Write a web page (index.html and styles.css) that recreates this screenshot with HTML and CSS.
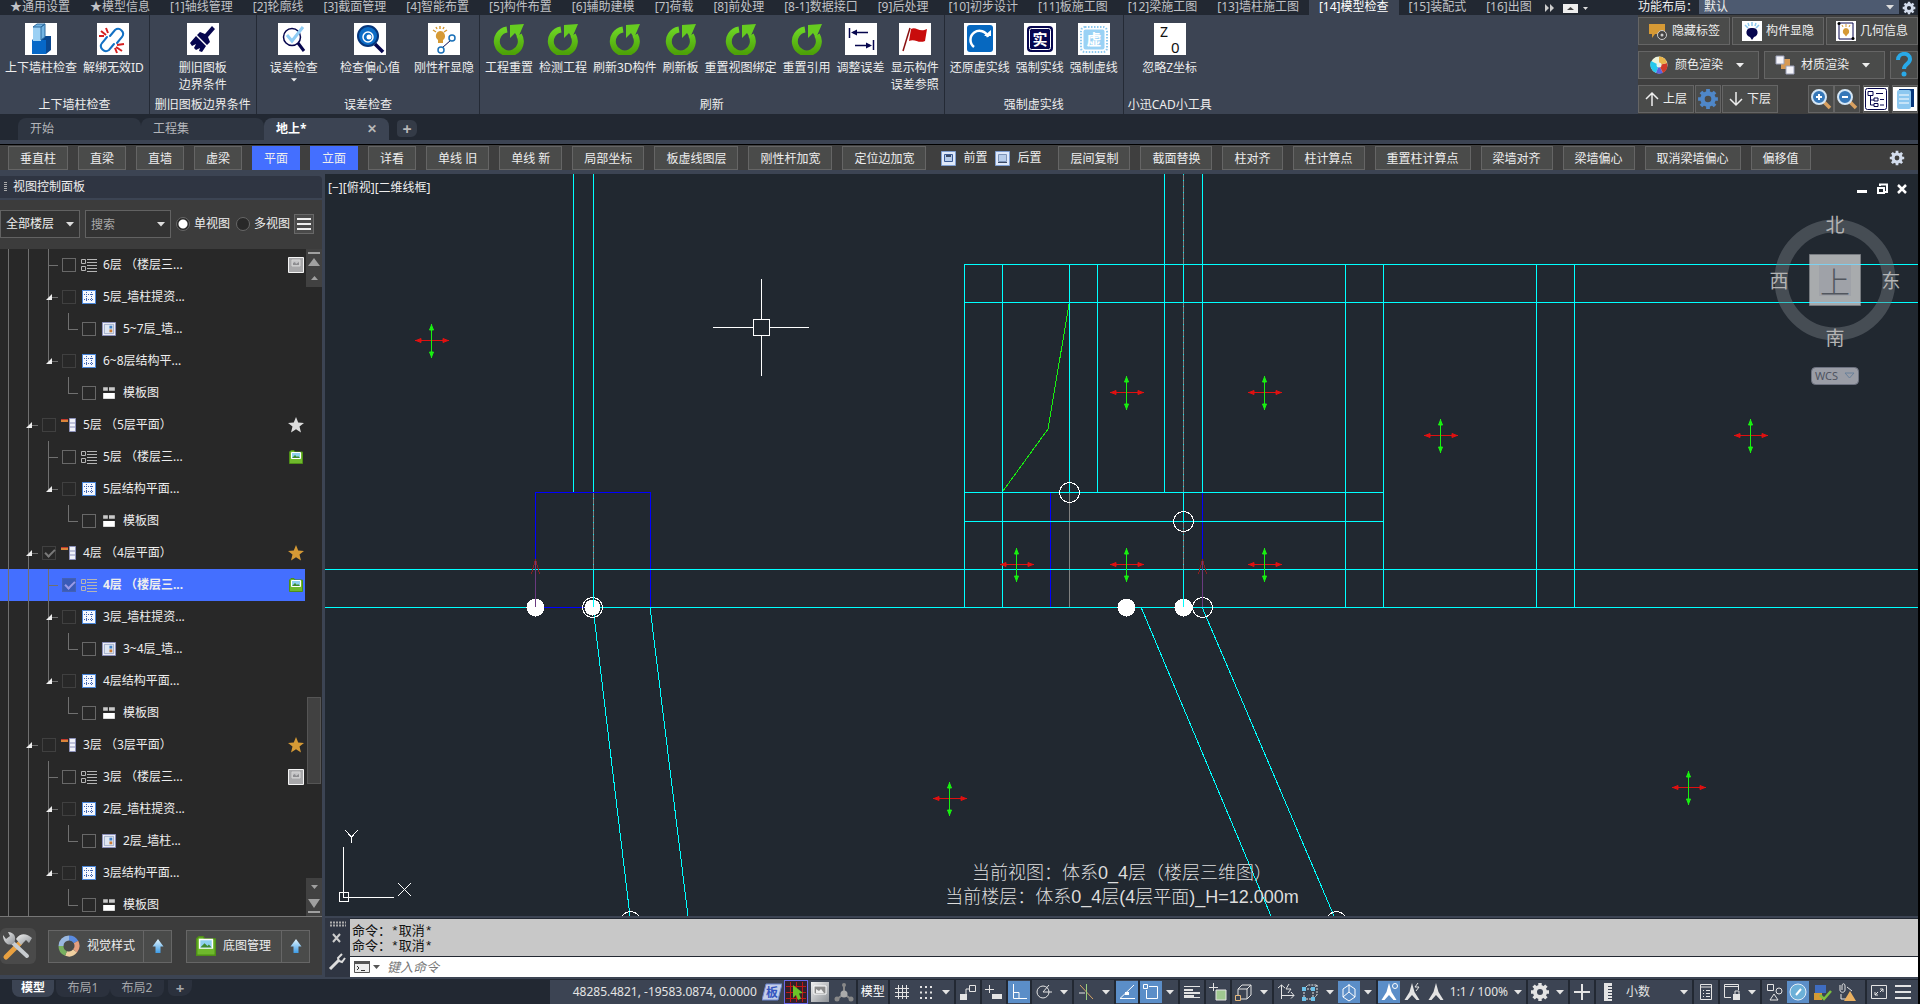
FILE: index.html
```html
<!DOCTYPE html>
<html lang="zh-CN">
<head>
<meta charset="utf-8">
<title>模型检查</title>
<link rel="stylesheet" href="styles.css">
</head>
<body>
<svg class="sprite" aria-hidden="true">
  <defs>
    <linearGradient id="green" x1="0" y1="0" x2="0" y2="1"><stop offset="0" stop-color="#6cd424"/><stop offset="1" stop-color="#4da208"/></linearGradient>
    <linearGradient id="sky" x1="0" y1="0" x2="0" y2="1"><stop offset="0" stop-color="#e4f6ff"/><stop offset="1" stop-color="#3c9be6"/></linearGradient>
    <linearGradient id="steel" x1="0" y1="0" x2="1" y2="1"><stop offset="0" stop-color="#f0f0f0"/><stop offset="1" stop-color="#8d9196"/></linearGradient>
  </defs>
  <symbol id="refresh" viewBox="0 0 32 32"><path d="M14 6.5A12 12 0 1 0 26 12" fill="none" stroke="url(#green)" stroke-width="6"/><path d="M17 2 31 1 25 15 22 10 17 15Z" fill="#66cc20"/></symbol>
  <symbol id="gear" viewBox="0 0 20 20"><g fill="none" stroke="currentColor"><circle cx="10" cy="10" r="5" stroke-width="4"/><path d="M10 1v3M10 16v3M1 10h3M16 10h3M3.6 3.6l2.1 2.1M14.3 14.3l2.1 2.1M3.6 16.4l2.1-2.1M14.3 5.7l2.1-2.1" stroke-width="3.4"/></g></symbol>
  <symbol id="grid" viewBox="0 0 14 14"><path d="M0 0h14v14H0z" fill="#4a86d8"/><path d="M1 1h12v12H1z" fill="#f4f8ff"/><path d="M2 4.5h10M2 9.5h10M4.5 2v10M9.500 2v10" stroke="#3c62b0" stroke-dasharray="1 1"/></symbol>
  <symbol id="list" viewBox="0 0 16 14"><path d="M.5 1.500h4v4h-4zM.5 8.500h4v4h-4z" fill="none" stroke="#b5b5b5"/><path d="M6 1.500h10M6 4.500h10M6 7.500h10M6 10.500h10M6 13.500h10" stroke="#b5b5b5"/></symbol>
  <symbol id="sheet" viewBox="0 0 15 15"><path d="M.5.5h14v14H.5z" fill="#f5f5fb" stroke="#8b90c0"/><path d="M2.500 2.500h10v10h-10z" fill="#dfe6f2" stroke="#9aa6c4"/><path d="M8 4h3v3H8z" fill="#3f7fc4"/><path d="M8 8h3v3H8z" fill="#c87b36"/></symbol>
  <symbol id="panel" viewBox="0 0 12 12"><path d="M1 1h4v3H1zM6 1h5v3H6z" fill="#c9c9c9"/><path d="M1 6h10v5H1z" fill="#fff"/></symbol>
  <symbol id="floor" viewBox="0 0 16 14"><path d="M0 1h7v3H0z" fill="#d9843a"/><path d="M0 1h7v1H0z" fill="#c03a2b"/><path d="M8.500.500h6v13h-6z" fill="#f1f3fa" stroke="#8d92bb"/><path d="M9 5h5M9 9h5" stroke="#8d92bb"/></symbol>
  <symbol id="star" viewBox="0 0 16 16"><path d="M8 0l2.200 5.500 5.800.4-4.500 3.700 1.500 6L8 12.300 3 15.600l1.500-6L0 5.900l5.800-.4z" fill="currentColor"/></symbol>
  <symbol id="pic" viewBox="0 0 14 14"><path d="M.5 2 2 .5h3L6 2h7.500v11.500H.5z" fill="#6fb92c" stroke="#4e8f17"/><path d="M2.500 2.500h9v6h-9z" fill="#8fd0ee" stroke="#fff"/><path d="M3 8l3-3 2 2 1-1 2 2z" fill="#3f8a2e"/></symbol>
  <symbol id="greypic" viewBox="0 0 16 16"><path d="M.5.500h15v15H.5z" fill="#a8a8aa" stroke="#f4f4f4"/><path d="M4 3h8v6H4z" fill="#c4c4c6" stroke="#d4d4d4"/><path d="M5 8V6l2-1 1 2 3-2v3z" fill="#8d8d90"/></symbol>
  <symbol id="tri" viewBox="0 0 8 5"><path d="M0 0h8L4 4.500z" fill="currentColor"/></symbol>
  <symbol id="uparrow" viewBox="0 0 12 16"><path d="M6 1l5.500 7.500H8.500V15h-5V8.500H.5z" fill="url(#sky)"/></symbol>
  <symbol id="person" viewBox="0 0 20 20"><path d="M10 1l2.500 9 5 8h-3l-4.500-5-4.500 5h-3l5-8z" fill="currentColor"/></symbol>
  <symbol id="cube" viewBox="0 0 20 20"><path d="M4 7h9v10H4zM4 7l4-4h9l-4 4M17 3v10l-4 4" fill="none" stroke="currentColor"/><path d="M1.500 13.500h5v5h-5z" fill="#3c4453" stroke="#e6b87c"/></symbol>
  <symbol id="cross" viewBox="0 0 36 36"><path d="M1 17.500h34M2 17.500l5-2v4zM34 17.500l-5-2v4z" stroke="#e01010" fill="#e01010"/><path d="M17.500 1v34M17.500 2l-2 5h4zM17.500 34l-2-5h4z" stroke="#18f010" fill="#18f010"/></symbol>
</svg>

<div class="app">
  <header class="top">
    <div class="ribbon-side">
      <nav class="menu">
        <a href="#">★通用设置</a><a href="#">★模型信息</a><a href="#">[1]轴线管理</a><a href="#">[2]轮廓线</a><a href="#">[3]截面管理</a><a href="#">[4]智能布置</a><a href="#">[5]构件布置</a><a href="#">[6]辅助建模</a><a href="#">[7]荷载</a><a href="#">[8]前处理</a><a href="#">[8-1]数据接口</a><a href="#">[9]后处理</a><a href="#">[10]初步设计</a><a href="#">[11]板施工图</a><a href="#">[12]梁施工图</a><a href="#">[13]墙柱施工图</a><a href="#" class="current">[14]模型检查</a><a href="#">[15]装配式</a><a href="#">[16]出图</a>
        <button class="more" aria-label="更多"><svg width="46" height="12" viewBox="0 0 46 12"><path d="M3 2l4 4-4 4zM8 2l4 4-4 4z" fill="#ccc"/><path d="M21 2h15v9H21z" fill="#eee"/><path d="M25 8h7l-3.500-3z" fill="#444"/><path d="M41 5h5l-2.500 3z" fill="#ddd"/></svg></button>
      </nav>
      <div class="ribbon">
        <section class="group">
          <div class="tools">
            <button class="tool"><svg viewBox="0 0 32 32"><path d="M0 0h32v32H0z" fill="#fff"/><path d="M7 17h14v14H7z" fill="#0668c8"/><path d="M7 17l5-4h14l-5 4zM21 17l5-4v14l-5 4z" fill="#0a4890"/><path d="M8 4h8v14H8z" fill="#9bd0f4"/><path d="M8 4l4-3h8l-4 3zM16 4l4-3v13l-4 3z" fill="#74b4e2" stroke="#2a6aa0"/></svg><span>上下墙柱检查</span></button>
            <button class="tool"><svg viewBox="0 0 32 32"><path d="M0 0h32v32H0z" fill="#fff"/><g fill="none" stroke="#1270c4" stroke-width="2" stroke-linecap="round"><path d="M13 13l5-6a5 5 0 0 1 7 7l-5 6"/><path d="M10 14l-5 6a5 5 0 0 0 7 7l5-6"/></g><path d="M9 5l2 5M4 8l5 4M2 13h5M20 22l7-1M19 24l6 4M18 25l2 5" stroke="#d42020" stroke-width="2"/></svg><span>解绑无效ID</span></button>
          </div>
          <h2>上下墙柱检查</h2>
        </section>
        <section class="group wide">
          <div class="tools">
            <button class="tool"><svg viewBox="0 0 32 32"><path d="M0 0h32v32H0z" fill="#fff"/><path d="M25 3l3 3-7 8 2 5-3 3L10 12l3-3 5 2zM9 13l10 10-4 6-3-1 1-3-4 2-2-2 2-4-4 2-2-3z" fill="#06064e"/></svg><span>删旧图板<br>边界条件</span></button>
          </div>
          <h2>删旧图板边界条件</h2>
        </section>
        <section class="group">
          <div class="tools">
            <button class="tool drop"><svg viewBox="0 0 32 32"><path d="M0 0h32v32H0z" fill="#fff"/><path d="M20 20l6 8" stroke="#06064e" stroke-width="3"/><circle cx="14" cy="14" r="8.500" fill="none" stroke="#06064e" stroke-width="1.500"/><path d="M9 12l5 6L25 4" fill="none" stroke="#8fcdf5" stroke-width="3"/></svg><span>误差检查</span><svg class="caret"><use href="#tri"/></svg></button>
            <button class="tool drop"><svg viewBox="0 0 32 32"><path d="M0 0h32v32H0z" fill="#fff"/><path d="M21 21l8 8" stroke="#06064e" stroke-width="3.500"/><circle cx="14" cy="13" r="10" fill="#0b6cc6" stroke="#06357a" stroke-width="2"/><circle cx="14" cy="14" r="5" fill="none" stroke="#fff" stroke-width="1.500"/><circle cx="15" cy="14" r="2.500" fill="#fff"/></svg><span>检查偏心值</span><svg class="caret"><use href="#tri"/></svg></button>
            <button class="tool"><svg viewBox="0 0 32 32"><path d="M0 0h32v32H0z" fill="#fff"/><path d="M12 8a5 5 0 0 1 3 9v3h-5v-3a5 5 0 0 1 2-9z" fill="#d69a35"/><path d="M12 3v3M5 7l3 2M19 7l-3 2M8 4l1 2M16 4l-1 2" stroke="#d69a35" stroke-width="1.500"/><path d="M14 25l9-8" stroke="#06064e"/><circle cx="24" cy="15" r="3" fill="#fff" stroke="#1a70b8" stroke-width="1.500"/><circle cx="13" cy="27" r="3" fill="#fff" stroke="#1a70b8" stroke-width="1.500"/></svg><span>刚性杆显隐</span></button>
          </div>
          <h2>误差检查</h2>
        </section>
        <section class="group">
          <div class="tools">
            <button class="tool"><svg><use href="#refresh"/></svg><span>工程重置</span></button>
            <button class="tool"><svg><use href="#refresh"/></svg><span>检测工程</span></button>
            <button class="tool"><svg><use href="#refresh"/></svg><span>刷新3D构件</span></button>
            <button class="tool"><svg><use href="#refresh"/></svg><span>刷新板</span></button>
            <button class="tool"><svg><use href="#refresh"/></svg><span>重置视图绑定</span></button>
            <button class="tool"><svg><use href="#refresh"/></svg><span>重置引用</span></button>
            <button class="tool"><svg viewBox="0 0 32 32"><path d="M0 0h32v32H0z" fill="#fff"/><path d="M4.500 5v10M28.500 17v10M8 9.500h15M10 22.500h15" stroke="#06064e" stroke-width="1.500"/><path d="M6 9.500l6-3v6zM27 22.500l-6-3v6z" fill="#06064e"/></svg><span>调整误差</span></button>
            <button class="tool"><svg viewBox="0 0 32 32"><path d="M0 0h32v32H0z" fill="#fff"/><path d="M4 28L11 5" stroke="#8a1010" stroke-width="1.500"/><path d="M12 6c5-3 8 4 16 0l-2 12c-7 3-10-3-16 0z" fill="#c80c0c"/></svg><span>显示构件<br>误差参照</span></button>
          </div>
          <h2>刷新</h2>
        </section>
        <section class="group">
          <div class="tools">
            <button class="tool"><svg viewBox="0 0 32 32"><path d="M0 0h32v32H0z" fill="#fff"/><rect x="3" y="2" width="26" height="27" rx="3" fill="#0668c0"/><path d="M10 24a9 9 0 1 1 14-10" fill="none" stroke="#fff" stroke-width="2.500"/><path d="M20 13h7v-6z" fill="#fff"/></svg><span>还原虚实线</span></button>
            <button class="tool"><svg viewBox="0 0 32 32"><path d="M0 0h32v32H0z" fill="#fff"/><rect x="3" y="3" width="26" height="26" rx="4" fill="#06064e"/><rect x="5.500" y="5.500" width="21" height="21" rx="2" fill="none" stroke="#fff"/><text x="8.500" y="22" font-size="15" font-weight="700" fill="#fff">实</text></svg><span>强制实线</span></button>
            <button class="tool"><svg viewBox="0 0 32 32"><path d="M0 0h32v32H0z" fill="#fff"/><rect x="3" y="4" width="26" height="25" rx="4" fill="none" stroke="#8cc8ee" stroke-width="2" stroke-dasharray="1.500 1.500"/><rect x="5.500" y="6.500" width="21" height="20" rx="2" fill="#9ad2f5"/><text x="8.500" y="22" font-size="15" font-weight="700" fill="#fff">虚</text></svg><span>强制虚线</span></button>
          </div>
          <h2>强制虚实线</h2>
        </section>
        <section class="group last">
          <div class="tools">
            <button class="tool"><svg viewBox="0 0 32 32"><path d="M0 0h32v32H0z" fill="#fff"/><text x="6" y="14" font-size="14" fill="#111">Z</text><text x="17" y="30" font-size="15" fill="#111">0</text></svg><span>忽略Z坐标</span></button>
          </div>
          <h2>小迅CAD小工具</h2>
        </section>
      </div>
    </div>

    <aside class="quick">
      <div class="layout-pick">
        <label for="layout">功能布局：</label>
        <span class="pick"><select id="layout"><option>默认</option></select><svg class="caret"><use href="#tri"/></svg></span>
        <button aria-label="设置" class="pale"><svg width="14" height="14"><use href="#gear"/></svg></button>
      </div>
      <div class="qrow three">
        <button class="key"><svg width="20" height="20" viewBox="0 0 20 20"><path d="M1 3h16v10H7l-3 4v-4H1z" fill="#d69a35"/><circle cx="14" cy="14" r="4.500" fill="#444" stroke="#ccc"/><circle cx="14" cy="14" r="1.500" fill="#ccc"/></svg>隐藏标签</button>
        <button class="key"><svg width="20" height="20" viewBox="0 0 20 20"><path d="M0 0h20v20H0z" fill="#fff"/><path d="M10 7a4.500 4.500 0 0 1 2 9l-2 3-2-3a4.500 4.500 0 0 1 2-9z" fill="#06064e"/><path d="M10 1v4M3 4l3 3M17 4l-3 3M6 2l1 3M14 2l-1 3" stroke="#8cc8ee" stroke-width="1.500"/></svg>构件显隐</button>
        <button class="key"><svg width="20" height="20" viewBox="0 0 20 20"><path d="M0 0h20v20H0z" fill="#fff"/><path d="M3 2v16h14V2z" fill="none" stroke="#06064e"/><circle cx="3" cy="2.500" r="1.500"/><circle cx="17" cy="17.500" r="1.500"/><path d="M10 7a3.500 3.500 0 0 1 1.500 6.500l-1.500 2-1.500-2A3.500 3.500 0 0 1 10 7z" fill="#d69a35"/><path d="M10 3v3M6 4l1 2M14 4l-1 2" stroke="#d69a35"/></svg>几何信息</button>
      </div>
      <div class="qrow two">
        <button class="key"><svg width="20" height="20" viewBox="0 0 20 20"><circle cx="10" cy="10" r="8.500" fill="#eef3dc"/><path d="M10 10L2 6a9 9 0 0 0 5 12z" fill="#25c8ee"/><path d="M10 10l-3 8a9 9 0 0 0 7 0z" fill="#5a62e0"/><path d="M10 10l4 8a9 9 0 0 0 4-10z" fill="#d03a2a"/><path d="M10 10l8-2a9 9 0 0 0-8-6.500z" fill="#e9b44a"/><circle cx="10" cy="10" r="2.500" fill="#e8f3ea"/></svg><span>颜色渲染</span><svg class="caret"><use href="#tri"/></svg></button>
        <button class="key"><svg width="20" height="20" viewBox="0 0 20 20"><path d="M6 4h9v10H6z" fill="#d69a55"/><path d="M1 1h8v8H1zM11 11h8v8h-8z" fill="#f4f4fa" stroke="#9aa0b8"/></svg><span>材质渲染</span><svg class="caret"><use href="#tri"/></svg></button>
        <button class="key small" aria-label="帮助"><svg width="20" height="26" viewBox="0 0 20 26"><path d="M4 8c0-8 12-8 12-1 0 5-6 5-6 10" fill="none" stroke="#29a9e8" stroke-width="4"/><circle cx="10" cy="22" r="2.500" fill="#29a9e8"/></svg></button>
      </div>
      <div class="qrow nav">
        <button class="key level"><svg width="14" height="16" viewBox="0 0 14 16"><path d="M7 15V2M1 8l6-6 6 6" fill="none" stroke="#eee" stroke-width="1.500"/></svg>上层</button>
        <button class="key icon blue" aria-label="楼层设置"><svg width="22" height="22"><use href="#gear"/></svg></button>
        <button class="key level"><svg width="14" height="16" viewBox="0 0 14 16"><path d="M7 1v13M1 8l6 6 6-6" fill="none" stroke="#eee" stroke-width="1.500"/></svg>下层</button>
        <span class="push"></span>
        <button class="key icon" aria-label="放大"><svg width="22" height="22" viewBox="0 0 22 22"><path d="M14 14l6 6" stroke="#d8a060" stroke-width="3.500"/><circle cx="9" cy="9" r="7" fill="#3577b8" stroke="#d4e6f5" stroke-width="2"/><path d="M9 6v6M6 9h6" stroke="#fff" stroke-width="2"/></svg></button><button class="key icon" aria-label="缩小"><svg width="22" height="22" viewBox="0 0 22 22"><path d="M14 14l6 6" stroke="#d8a060" stroke-width="3.500"/><circle cx="9" cy="9" r="7" fill="#3577b8" stroke="#d4e6f5" stroke-width="2"/><path d="M6 9h6" stroke="#fff" stroke-width="2"/></svg></button>
        <button class="key icon gap" aria-label="结构树"><svg width="24" height="24" viewBox="0 0 24 24"><rect width="24" height="24" fill="#fff"/><rect x="1.500" y="1.500" width="21" height="21" rx="2" fill="#fff" stroke="#06064e"/><path d="M4 4.500h5v4H4zM6.500 9v9H10M6.500 13H10M12 6.500h7M10 11h4v3h-4zM10 16.500h4v3h-4zM16 12.500h4M16 18h4" fill="none" stroke="#06064e"/></svg></button>
        <button class="key icon gap" aria-label="列表"><svg width="24" height="24" viewBox="0 0 24 24"><rect width="24" height="24" fill="#fff"/><path d="M6 2h15v18H8z" fill="#06357a"/><rect x="4" y="3" width="14" height="19" rx="2" fill="#8dc8f0"/><path d="M6 8h10M6 12h10M6 16h10" stroke="#fff"/></svg></button>
      </div>
    </aside>
  </header>

  <nav class="docs">
    <a href="#" class="doc"><span>开始</span></a>
    <a href="#" class="doc"><span>工程集</span></a>
    <a href="#" class="doc on"><span>地上*</span><b>✕</b></a>
    <button class="add" aria-label="新建">+</button>
  </nav>

  <div class="bar">
    <button class="key">垂直柱</button><button class="key">直梁</button><button class="key">直墙</button><button class="key">虚梁</button><button class="key on">平面</button><button class="key on">立面</button><button class="key">详看</button><button class="key">单线 旧</button><button class="key">单线 新</button><button class="key">局部坐标</button><button class="key">板虚线图层</button><button class="key">刚性杆加宽</button><button class="key">定位边加宽</button>
    <div class="order">
      <button><svg width="15" height="15" viewBox="0 0 15 15"><path d="M.5.500h14v14H.5z" fill="#dfe9fa" stroke="#7f9ed0"/><path d="M3.500 3.500h8v7h-8z" fill="#b8cdea" stroke="#3a5a96"/><path d="M5 4h5v2H5z" fill="#3a4a66"/></svg>前置</button>
      <button><svg width="15" height="15" viewBox="0 0 15 15"><path d="M.5.500h14v14H.5z" fill="#dfe9fa" stroke="#7f9ed0"/><path d="M3.500 3.500h8v7h-8z" fill="#b8cdea" stroke="#7c93b8"/><path d="M3 11.500h9" stroke="#3a4a66"/></svg>后置</button>
    </div>
    <button class="key">层间复制</button><button class="key">截面替换</button><button class="key">柱对齐</button><button class="key">柱计算点</button><button class="key">重置柱计算点</button><button class="key">梁墙对齐</button><button class="key">梁墙偏心</button><button class="key">取消梁墙偏心</button><button class="key">偏移值</button>
    <button class="pale end" aria-label="工具栏设置"><svg width="16" height="16"><use href="#gear"/></svg></button>
  </div>

  <main class="work">
    <aside class="side">
      <h1><i></i>视图控制面板</h1>
      <div class="filter">
        <span class="pick floors"><select aria-label="楼层"><option>全部楼层</option></select><svg class="caret"><use href="#tri"/></svg></span>
        <span class="pick search"><input type="text" placeholder="搜索" aria-label="搜索"><svg class="caret"><use href="#tri"/></svg></span>
        <label><input type="radio" name="views" checked>单视图</label>
        <label><input type="radio" name="views">多视图</label>
        <button class="burger" aria-label="菜单"><i></i><i></i><i></i></button>
      </div>
      <div class="tree-box">
        <div class="tree">
          <div class="row"><i class="g"></i><i class="g"></i><i class="b full"></i><label><input type="checkbox"><svg><use href="#list"/></svg>6层 （楼层三...</label><svg class="tag"><use href="#greypic"/></svg></div>
          <div class="row"><i class="g"></i><i class="g"></i><i class="b full open"></i><label><input type="checkbox" disabled><svg><use href="#grid"/></svg>5层_墙柱提资...</label></div>
          <div class="row"><i class="g"></i><i class="g"></i><i class="g"></i><i class="b half"></i><label><input type="checkbox"><svg><use href="#sheet"/></svg>5~7层_墙...</label></div>
          <div class="row"><i class="g"></i><i class="g"></i><i class="b half open"></i><label><input type="checkbox" disabled><svg><use href="#grid"/></svg>6~8层结构平...</label></div>
          <div class="row"><i class="g"></i><i class="g"></i><i class="g none"></i><i class="b half"></i><label><input type="checkbox"><svg><use href="#panel"/></svg>模板图</label></div>
          <div class="row"><i class="g"></i><i class="b full open"></i><label><input type="checkbox" disabled><svg><use href="#floor"/></svg>5层 （5层平面）</label><svg class="tag"><use href="#star"/></svg></div>
          <div class="row"><i class="g"></i><i class="g"></i><i class="b full"></i><label><input type="checkbox"><svg><use href="#list"/></svg>5层 （楼层三...</label><svg class="tag small"><use href="#pic"/></svg></div>
          <div class="row"><i class="g"></i><i class="g"></i><i class="b half open"></i><label><input type="checkbox" disabled><svg><use href="#grid"/></svg>5层结构平面...</label></div>
          <div class="row"><i class="g"></i><i class="g"></i><i class="g none"></i><i class="b half"></i><label><input type="checkbox"><svg><use href="#panel"/></svg>模板图</label></div>
          <div class="row"><i class="g"></i><i class="b full open"></i><label><input type="checkbox" disabled checked><svg><use href="#floor"/></svg>4层 （4层平面）</label><svg class="tag gold"><use href="#star"/></svg></div>
          <div class="row picked"><i class="g"></i><i class="g"></i><i class="b full"></i><label><input type="checkbox" checked><svg><use href="#list"/></svg>4层 （楼层三...</label><svg class="tag small"><use href="#pic"/></svg></div>
          <div class="row"><i class="g"></i><i class="g"></i><i class="b full open"></i><label><input type="checkbox" disabled><svg><use href="#grid"/></svg>3层_墙柱提资...</label></div>
          <div class="row"><i class="g"></i><i class="g"></i><i class="g"></i><i class="b half"></i><label><input type="checkbox"><svg><use href="#sheet"/></svg>3~4层_墙...</label></div>
          <div class="row"><i class="g"></i><i class="g"></i><i class="b half open"></i><label><input type="checkbox" disabled><svg><use href="#grid"/></svg>4层结构平面...</label></div>
          <div class="row"><i class="g"></i><i class="g"></i><i class="g none"></i><i class="b half"></i><label><input type="checkbox"><svg><use href="#panel"/></svg>模板图</label></div>
          <div class="row"><i class="g"></i><i class="b full open"></i><label><input type="checkbox" disabled><svg><use href="#floor"/></svg>3层 （3层平面）</label><svg class="tag gold"><use href="#star"/></svg></div>
          <div class="row"><i class="g"></i><i class="g"></i><i class="b full"></i><label><input type="checkbox"><svg><use href="#list"/></svg>3层 （楼层三...</label><svg class="tag"><use href="#greypic"/></svg></div>
          <div class="row"><i class="g"></i><i class="g"></i><i class="b full open"></i><label><input type="checkbox" disabled><svg><use href="#grid"/></svg>2层_墙柱提资...</label></div>
          <div class="row"><i class="g"></i><i class="g"></i><i class="g"></i><i class="b half"></i><label><input type="checkbox"><svg><use href="#sheet"/></svg>2层_墙柱...</label></div>
          <div class="row"><i class="g"></i><i class="g"></i><i class="b half open"></i><label><input type="checkbox" disabled><svg><use href="#grid"/></svg>3层结构平面...</label></div>
          <div class="row"><i class="g"></i><i class="g"></i><i class="g none"></i><i class="b half"></i><label><input type="checkbox"><svg><use href="#panel"/></svg>模板图</label></div>
        </div>
        <div class="scroll">
          <svg width="16" height="38" viewBox="0 0 16 38"><path d="M2 3h12v2H2zM2 17h12L8 9zM5 31h7l-3.500-4z" fill="#a0a0a0"/></svg>
          <i class="before"></i><i class="thumb"></i><i class="after"></i>
          <svg width="16" height="38" viewBox="0 0 16 38"><path d="M5 7h7l-3.500 4zM2 21h12l-6 9zM2 33h12v2H2z" fill="#a0a0a0"/></svg>
        </div>
      </div>
      <div class="foot">
        <button class="wrench" aria-label="工具"><svg width="32" height="30" viewBox="0 0 32 30"><path d="M4 26L18 12" stroke="#e8a040" stroke-width="5" stroke-linecap="round"/><path d="M14 8c5-7 11-5 16-1l-3 5-3-3-5 5z" fill="url(#steel)"/><path d="M11 12l14 13" stroke="#c8ccd0" stroke-width="4" stroke-linecap="round"/><path d="M1 4l3 4 4-3-2-4c6 0 9 5 6 11-5 4-11 0-11-8z" fill="url(#steel)"/></svg></button>
        <div class="split"><button class="wide-key"><svg width="22" height="22" viewBox="0 0 22 22"><g fill="none" stroke-width="5"><path d="M11 3a8 8 0 0 1 7 4" stroke="#5a8be0"/><path d="M18 7a8 8 0 0 1-1 9" stroke="#e6a080"/><path d="M17 16a8 8 0 0 1-9 2.500" stroke="#f0d0a0"/><path d="M8 18.500A8 8 0 0 1 3 11" stroke="#78b060"/><path d="M3 11a8 8 0 0 1 8-8" stroke="#9ab8e0"/></g></svg>视觉样式</button><button class="up" aria-label="展开视觉样式"><svg width="12" height="16"><use href="#uparrow"/></svg></button></div>
        <div class="split"><button class="wide-key"><svg width="20" height="20"><use href="#pic"/></svg>底图管理</button><button class="up" aria-label="展开底图管理"><svg width="12" height="16"><use href="#uparrow"/></svg></button></div>
      </div>
    </aside>

    <section class="stage">
      <div class="canvas">
        <svg class="drawing">
          <g transform="translate(-325 -174)" fill="none" shape-rendering="crispEdges">
            <g stroke="#808080"><path d="M1183.500 174V569M1069.500 492V607M593.500 492V569"/></g>
            <g stroke="#00e8f0" stroke-dasharray="1 5"><path d="M1183.500 174V569M593.500 492V569"/></g>
            <g stroke="#0000ff"><path d="M535.500 492V607M535 492.500H650M650.500 492V607M1050.500 492V607M1202.500 492V560"/></g>
            <g stroke="#00ffff">
              <path d="M964 264.500H2600M964 302.500H2600M964 492.500H1384M964 521.500H1384M325 569.500H2600M325 607.500H2600"/>
              <path d="M964.500 264V607M1002.500 264V607M1069.500 264V492M1097.500 264V492M1164.500 174V492M1202.500 174V492M1345.500 264V607M1383.500 264V607M1536.500 264V607M1574.500 264V607"/>
              <path d="M1183.500 264V302M1183.500 492V521M573.500 174V492M593.500 174V492"/>
              <path d="M593 607L630 916M650 607L688 916M1141 607L1271 916M1202 607L1334 916"/>
            </g>
            <path d="M535 607.500H593" stroke="#0000ff"/>
            <path d="M1069 304L1048 429 1003 491" stroke="#18f010"/>
            <g fill="#fff"><circle cx="535.500" cy="607.500" r="9"/><circle cx="592.500" cy="607.500" r="8"/><circle cx="1126.500" cy="607.500" r="9"/><circle cx="1183.500" cy="607.500" r="9"/></g>
            <g stroke="#fff"><circle cx="592.500" cy="607.500" r="10"/><circle cx="1202.500" cy="607.500" r="10"/><circle cx="1069.500" cy="492.500" r="10"/><circle cx="1183.500" cy="521.500" r="10"/><circle cx="630.500" cy="921.500" r="10"/><circle cx="1336.500" cy="921.500" r="10"/></g>
            <path d="M593.500 569V607M1183.500 569V607" stroke="#00ffff"/>
            <path d="M535.500 560V607M1202.500 560V607" stroke="#6a3a80"/>
            <path d="M535.500 559l-4 15M535.500 559l4 15M1202.500 559l-4 15M1202.500 559l4 15" stroke="#8b2020"/>
            <g stroke="#fff"><path d="M713 327.500H753M770 327.500H809M761.500 279V319M761.500 336V376M753.500 319.500h16v16h-16z"/><path d="M343.500 847V897.500H394M339.500 892.500h9v9h-9zM398 883l13 13M411 883l-13 13M345 830l6.500 7 6.500-7M351.500 837v6"/></g>
          </g>
          <g transform="translate(-325 -174)">
            <use href="#cross" x="414" y="323" width="36" height="36"/><use href="#cross" x="1109" y="375" width="36" height="36"/><use href="#cross" x="1247" y="375" width="36" height="36"/><use href="#cross" x="1423" y="418" width="36" height="36"/><use href="#cross" x="1733" y="418" width="36" height="36"/><use href="#cross" x="999" y="547" width="36" height="36"/><use href="#cross" x="1109" y="547" width="36" height="36"/><use href="#cross" x="1247" y="547" width="36" height="36"/><use href="#cross" x="932" y="781" width="36" height="36"/><use href="#cross" x="1671" y="770" width="36" height="36"/>
          </g>
        </svg>
        <span class="view-name">[−][俯视][二维线框]</span>
        <div class="win"><button aria-label="最小化"><svg width="12" height="12" viewBox="0 0 12 12"><path d="M1 7h10v3H1z" fill="#fff"/></svg></button><button aria-label="还原"><svg width="12" height="12" viewBox="0 0 12 12"><path d="M2 5h6v5H2zM4 3V1.500h7V9H9" fill="none" stroke="#fff" stroke-width="2"/></svg></button><button aria-label="关闭"><svg width="12" height="12" viewBox="0 0 12 12"><path d="M2 2l8 8M10 2l-8 8" stroke="#fff" stroke-width="2.500"/></svg></button></div>
        <div class="compass">
          <svg width="140" height="186" viewBox="0 0 140 186">
            <circle cx="70" cy="70" r="54" fill="none" stroke="#747a80" stroke-opacity=".45" stroke-width="13"/>
            <path d="M44.500 44.500h51v51h-51z" fill="#b4b6b8" fill-opacity=".92" stroke="#777b80"/>
            <path d="M54 55h32v31H54z" fill="#9fa2a8"/>
            <path d="M44 54.500h52M44 92.500h52" stroke="#7fd0ee"/>
            <text x="70" y="83" font-size="30" font-weight="300" text-anchor="middle" fill="#51565e">上</text>
            <g font-size="19" text-anchor="middle" fill="#b4b4b4"><text x="70" y="22">北</text><text x="14" y="78">西</text><text x="126" y="78">东</text><text x="70" y="135">南</text></g>
            <rect x="46.500" y="157.500" width="47" height="17" rx="4" fill="#9a9da6" stroke="#6d7280"/>
            <text x="50" y="170" font-size="11" fill="#4e5360">WCS</text><path d="M80 163h9l-4.500 5z" fill="none" stroke="#68809a"/>
          </svg>
        </div>
        <p class="caption">当前视图：体系0_4层（楼层三维图）<br>当前楼层：体系0_4层(4层平面)_H=12.000m</p>
      </div>
      <div class="command">
        <div class="handle"><svg width="25" height="58" viewBox="0 0 25 58"><path d="M5 4.500h16M5 7.500h16" stroke="#aaa" stroke-width="2" stroke-dasharray="2 1"/><path d="M8 16l7 8M15 16l-7 8" stroke="#ccc" stroke-width="2"/><path d="M5 51l9-9" stroke="#ddd" stroke-width="3"/><path d="M17 36l-4 4 1 3 3 1 3-4" fill="none" stroke="#ddd" stroke-width="2"/></svg></div>
        <div class="console">
          <div class="log">命令：*取消*<br>命令：*取消*</div>
          <div class="entry"><svg width="28" height="14" viewBox="0 0 28 14"><path d="M.5 1.500h15v11H.5z" fill="#eee" stroke="#555"/><path d="M0 1h16v3H0z" fill="#555"/><path d="M3 6l2 2-2 2M7 10.500h4" fill="none" stroke="#333"/><path d="M19 5h7l-3.500 4z" fill="#555"/></svg><input type="text" placeholder="键入命令" aria-label="命令"></div>
        </div>
      </div>
    </section>
  </main>

  <footer class="status">
    <nav class="sheets"><a href="#" class="on">模型</a><a href="#">布局1</a><a href="#">布局2</a><button aria-label="新建布局">+</button></nav>
    <div class="seg info"><span class="coords">48285.4821, -19583.0874, 0.0000</span>
      <button class="c" aria-label="板"><svg viewBox="0 0 20 20"><path d="M4 2h16l-4 16H0z" fill="#c3cee8" stroke="#6b84d0"/><text x="4" y="15" font-size="12" font-weight="700" fill="#3455c0">板</text></svg></button>
      <button class="c red" aria-label="选择"><svg viewBox="0 0 20 20"><path d="M4.500 0v20M10.500 0v20M16.500 0v20M0 4.500h20M0 10.500h20M0 16.500h20" stroke="#c01818"/><path d="M7 3l10 8-4 .5 2 5-3 1.500-2-5-3 3z" fill="#6cc428"/></svg></button>
      <button class="c" aria-label="底图"><svg viewBox="0 0 20 20"><path d="M1 0h18v20H1z" fill="url(#steel)"/><path d="M4 4h12v8H4z" fill="#8a8a8a" stroke="#fff"/><path d="M6 11V7l3 2 2-2 3 4z" fill="#eee"/></svg></button>
      <button class="c" aria-label="坐标"><svg viewBox="0 0 20 20"><path d="M10 4v8M10 12l-7 5M10 12l7 5" stroke="#888" stroke-width="2"/><circle cx="10" cy="3" r="2" fill="#888"/><circle cx="10" cy="12" r="3.500" fill="#aaa"/><circle cx="3" cy="17" r="2.500" fill="#888"/><circle cx="17" cy="17" r="2.500" fill="#888"/></svg></button></div>
    <button class="seg word strong">模型</button>
    <div class="seg"><button class="c" aria-label="栅格"><svg viewBox="0 0 20 20"><path d="M6.500 3v14M10.500 3v14M14.500 3v14M3 6.500h14M3 10.500h14M3 14.500h14" stroke="currentColor"/></svg></button><button class="c" aria-label="捕捉"><svg viewBox="0 0 20 20"><path d="M4 5h14M4 10.500h14M4 16h14" stroke="currentColor" stroke-width="2" stroke-dasharray="2 3"/></svg></button><button class="d" aria-label="捕捉选项"><svg><use href="#tri"/></svg></button></div>
    <div class="seg"><button class="c" aria-label="推断约束"><svg viewBox="0 0 20 20"><path d="M2 12h7v6H2z" fill="currentColor"/><path d="M11.500 3.500h6v6h-6zM11 7H8v5" fill="none" stroke="currentColor"/></svg></button></div>
    <div class="seg"><button class="c" aria-label="动态输入"><svg viewBox="0 0 20 20"><path d="M5.500 3v8M1 7.500h9" stroke="currentColor"/><path d="M8 12h10v5H8z" fill="currentColor"/></svg></button></div>
    <div class="seg"><button class="c lit" aria-label="正交"><svg viewBox="0 0 20 20"><path d="M4.500 2v14.500H18M4 10.500h6V17" fill="none" stroke="currentColor"/></svg></button></div>
    <div class="seg"><button class="c" aria-label="极轴"><svg viewBox="0 0 20 20"><circle cx="9" cy="10" r="6" fill="none" stroke="currentColor"/><path d="M9 10h9M9 10l6-7" stroke="currentColor"/></svg></button><button class="d" aria-label="极轴选项"><svg><use href="#tri"/></svg></button></div>
    <div class="seg"><button class="c" aria-label="等轴测"><svg viewBox="0 0 20 20"><path d="M4 3l13 14" stroke="#d6a468"/><path d="M10.500 2v16" stroke="#9ad080"/><path d="M3 11h6" stroke="currentColor"/></svg></button><button class="d" aria-label="等轴测选项"><svg><use href="#tri"/></svg></button></div>
    <div class="seg"><button class="c lit" aria-label="对象追踪"><svg viewBox="0 0 20 20"><path d="M17 3L3 16.500h15" fill="none" stroke="currentColor"/><path d="M8 10h4v3H8z" fill="currentColor"/></svg></button></div>
    <div class="seg"><button class="c lit" aria-label="对象捕捉"><svg viewBox="0 0 20 20"><path d="M2.500 2.500h4v4h-4zM8 4.500h8.500v12h-11V8" fill="none" stroke="currentColor"/></svg></button><button class="d" aria-label="捕捉点选项"><svg><use href="#tri"/></svg></button></div>
    <div class="seg"><button class="c" aria-label="线宽"><svg viewBox="0 0 20 20"><path d="M2 4.500h16M2 15.500h16" stroke="currentColor"/><path d="M2 8h9M2 11h16M2 14h10" stroke="currentColor" stroke-width="2"/></svg></button></div>
    <div class="seg"><button class="c" aria-label="选择循环"><svg viewBox="0 0 20 20"><path d="M5.500 1v8M1 5.500h9" stroke="currentColor"/><path d="M8 8h10v10H8z" fill="#a0c890" stroke="currentColor"/></svg></button></div>
    <div class="seg"><button class="c" aria-label="三维捕捉"><svg><use href="#cube"/></svg></button><button class="d" aria-label="三维捕捉选项"><svg><use href="#tri"/></svg></button></div>
    <div class="seg"><button class="c" aria-label="动态UCS"><svg viewBox="0 0 20 20"><path d="M5.500 17V3M2 6l3.500-3L9 6M5 13.500h13M15 10l3 3.500-3 3M13 2l-3 5h5l-3 4" fill="none" stroke="currentColor"/></svg></button><button class="c" aria-label="选择过滤"><svg viewBox="0 0 20 20"><path d="M4 7h9v10H4zM4 7l4-4h9l-4 4M17 3v10l-4 4" fill="none" stroke="currentColor" stroke-dasharray="2 1"/><path d="M2 15h4v4H2zM11 5h4v4h-4zM2 5h4v4H2zM11 15h4v4h-4z" fill="#6cc0e8"/></svg></button><button class="d" aria-label="过滤选项"><svg><use href="#tri"/></svg></button><button class="c lit" aria-label="小控件"><svg viewBox="0 0 20 20"><path d="M10 2v8l-6 5M10 10l6 5M4 7l6-4 6 4v8l-6 4-6-4z" fill="none" stroke="currentColor"/></svg></button><button class="d" aria-label="小控件选项"><svg><use href="#tri"/></svg></button></div>
    <div class="seg"><button class="c lit" aria-label="注释可见性"><svg viewBox="0 0 20 20"><use href="#person"/><circle cx="16" cy="4" r="2.500" fill="none" stroke="currentColor"/></svg></button><button class="c" aria-label="自动缩放"><svg viewBox="0 0 20 20"><use href="#person"/><path d="M16 1l-3 4h4l-3 4" fill="none" stroke="currentColor"/></svg></button><button class="c" aria-label="注释比例"><svg><use href="#person"/></svg></button><button class="word scale">1:1 / 100%</button><button class="d" aria-label="比例选项"><svg><use href="#tri"/></svg></button></div>
    <div class="seg"><button class="c" aria-label="工作空间"><svg><use href="#gear"/></svg></button><button class="d" aria-label="工作空间选项"><svg><use href="#tri"/></svg></button></div>
    <div class="seg"><button class="c" aria-label="注释监视器"><svg viewBox="0 0 20 20"><path d="M10 2v16M2 10h16" stroke="currentColor" stroke-width="2"/></svg></button></div>
    <div class="seg units"><button class="c" aria-label="单位"><svg viewBox="0 0 20 20"><path d="M6 1h8v18H6z" fill="currentColor"/><path d="M10 4.500h4M10 7.500h4M10 10.500h4M10 13.500h4M10 16.500h4" stroke="#3c4453"/></svg></button><button class="word">小数</button><button class="d" aria-label="单位选项"><svg><use href="#tri"/></svg></button></div>
    <div class="seg"><button class="c" aria-label="快捷特性"><svg viewBox="0 0 20 20"><path d="M4.500 2.500h11v15h-11zM4 5h12M7 8.500h1M10 8.500h4M7 11.500h1M10 11.500h4M7 14.500h1M10 14.500h4" fill="none" stroke="currentColor"/></svg></button></div>
    <div class="seg"><button class="c" aria-label="锁定界面"><svg viewBox="0 0 20 20"><path d="M9 15.500H2.500v-13h14V8M2 4.500h15" fill="none" stroke="currentColor"/><path d="M11 12h7v6h-7z" fill="currentColor"/><path d="M13 12V9h4v3" fill="none" stroke="currentColor"/></svg></button><button class="d" aria-label="锁定选项"><svg><use href="#tri"/></svg></button></div>
    <div class="seg checks"><button class="c" aria-label="隔离对象"><svg viewBox="0 0 20 20"><path d="M3.500 2.500h6v6h-6zM10 12l4 6H6z" fill="none" stroke="currentColor"/><circle cx="15" cy="9" r="3" fill="none" stroke="currentColor"/></svg></button><button class="c lit" aria-label="图形性能"><svg viewBox="0 0 20 20"><circle cx="10" cy="10" r="8" fill="#6cb0d8" stroke="#e4eef6"/><path d="M8 13l5-6" stroke="#fff" stroke-width="2"/></svg></button><button class="c" aria-label="校验"><svg viewBox="0 0 20 20"><path d="M3 3h11v8H3z" fill="#3f6cc0"/><path d="M2 11h8v7H2z" fill="#d69a35"/><path d="M8 13l4 4 7-8" fill="none" stroke="#7cc040" stroke-width="2.500"/></svg></button><button class="c" aria-label="附着警告"><svg viewBox="0 0 20 20"><path d="M3 3v5c0 3 5 3 5 0V4c0-3-3-3-3 0v4M4 12v5h6M10 5l5 4" fill="none" stroke="currentColor"/><path d="M13 9l6 10H7z" fill="#eab060"/></svg></button></div>
    <div class="seg view"><button class="c" aria-label="全屏"><svg viewBox="0 0 20 20"><path d="M2.500 3.500h15v13h-15zM6 13l3-3M6 10v3h3M14 7l-3 3M11 7h3v3" fill="none" stroke="currentColor"/></svg></button><button class="c" aria-label="自定义"><svg viewBox="0 0 20 20"><path d="M2 4h16M2 10h16M2 16h16" stroke="currentColor" stroke-width="2"/></svg></button></div>
  </footer>
</div>
</body>
</html>
```
FILE: styles.css
```css
* { box-sizing: border-box; }

body {
  margin: 0;
  background: #000;
  color: #eee;
  font: 12px/16px "Noto Sans", "Noto Sans CJK SC", sans-serif;
}

button, input, select {
  margin: 0;
  padding: 0;
  border: 0;
  border-radius: 0;
  background: none;
  color: inherit;
  font: inherit;
}

a { color: inherit; text-decoration: none; }
svg { display: block; flex: none; }
h1, h2, p { margin: 0; font-size: 12px; font-weight: 400; }
.sprite { width: 0; height: 0; position: absolute; }
.caret { width: 8px; height: 5px; }

.app {
  display: flex;
  flex-direction: column;
  height: 100vh;
  border-right: 2px solid #000;
  background: #3c4453;
  overflow: hidden;
}

/* menu and ribbon */
.top { display: grid; grid-template-columns: minmax(0, 1fr) 280px; }
.menu { display: flex; height: 15px; background: #222832; color: #c0c2c6; line-height: 14px; white-space: nowrap; }
.menu a { padding: 0 10px; }
.menu .current { background: #3c4453; color: #fff; }
.ribbon { display: flex; height: 99px; white-space: nowrap; }
.group { display: flex; flex-direction: column; justify-content: space-between; padding: 8px 2px 1px; border-right: 1px solid #242a35; }
.group.wide { width: 107px; }
.group.last { border: 0; padding-left: 4px; }
.group h2 { text-align: center; }
.tools { display: flex; justify-content: center; }
.tool { display: flex; flex-direction: column; align-items: center; justify-content: flex-start; padding: 0 3px; line-height: 17px; }
.tool svg { width: 32px; height: 32px; }
.tool span { margin-top: 4px; }
.tool .caret { width: 6px; height: 4px; margin-top: 2px; }
.tool.drop { padding: 0 11px; }

/* shortcuts at the right of the ribbon */
.quick { display: flex; flex-direction: column; gap: 6px; background: #3f3f3f; white-space: nowrap; }
.layout-pick { display: flex; height: 15px; margin-bottom: -4px; background: #222832; line-height: 14px; }
.layout-pick label { width: 61px; }
.pick { display: grid; align-items: center; }
.pick > * { grid-area: 1 / 1; }
.pick .caret { justify-self: end; margin-right: 5px; color: #ddd; pointer-events: none; }
.pick select, .pick input { appearance: none; width: 100%; height: 100%; padding-left: 5px; }
.layout-pick .pick { flex: 1; height: 14px; background: #4d5a70; }
.layout-pick .pale { width: 19px; }
.pale { display: flex; align-items: center; justify-content: center; color: #d3dcec; }
.qrow { display: flex; height: 28px; }
.key { display: flex; align-items: center; justify-content: center; gap: 4px; border: 1px solid #656565; background: #4a4b4a; }
.three { gap: 2px; }
.three .key { flex: 1; }
.two { gap: 5px; }
.two .key { flex: 1; justify-content: space-between; padding: 0 14px 0 10px; gap: 6px; }
.two .key span { flex: 1; text-align: left; }
.two .key.small { flex: 0 0 28px; padding: 0 3px; }
.nav { gap: 0; }
.level { width: 56px; }
.icon { width: 26px; overflow: hidden; }
.icon.blue { margin: 0 1px; color: #4f87c8; }
.icon.gap { margin-left: 3px; }
.push { flex: 1; }

/* document tabs */
.docs { display: flex; align-items: flex-end; height: 30px; padding-left: 18px; border-bottom: 4px solid #3c4453; background: #222832; }
.doc { display: flex; justify-content: space-between; align-items: center; width: 123px; height: 22px; padding: 0 12px; border-radius: 8px 8px 0 0; background: #2e3541; color: #b4b6ba; }
.doc.on { width: 125px; margin-right: 8px; background: #3c4453; color: #fff; font-weight: 700; }
.doc b { color: #b8b8b8; }
.add { width: 20px; height: 17px; margin-bottom: 3px; border-radius: 4px 6px 6px 4px; background: #343b47; color: #b8b8b8; font-size: 16px; font-weight: 700; line-height: 16px; }

/* drawing toolbar */
.bar { display: flex; gap: 10px; height: 26px; padding: 1px 0 0 8px; border-top: 1px solid #000; background: #3f3f3f; white-space: nowrap; }
.bar .key { padding: 1px 11px 0; }
.bar .key.on { border-color: #446fff; background: #446fff; }
.order { display: flex; gap: 8px; padding: 0 7px 0 5px; }
.order button { display: flex; align-items: center; gap: 7px; }
.bar .end { width: 42px; margin-left: auto; }

.work { display: grid; grid-template-columns: 322px minmax(0, 1fr); gap: 3px; flex: 1; min-height: 0; }

/* view control panel */
.side { display: flex; flex-direction: column; min-height: 0; padding: 6px 0 4px; }
.side h1 { display: flex; align-items: center; gap: 6px; height: 22px; margin-bottom: 2px; padding-left: 4px; border-top-right-radius: 4px; background: #2f3542; }
.side h1 i { width: 3px; height: 10px; background: repeating-linear-gradient(#aaa 0 1px, transparent 1px 2px); }
.filter { display: flex; align-items: center; height: 49px; padding-bottom: 1px; background: #3c3c3c; white-space: nowrap; }
.filter .pick { height: 28px; border: 1px solid #626262; background: #333; }
.filter .floors { width: 80px; margin-right: 5px; }
.filter .search { width: 86px; margin-right: 5px; }
.filter ::placeholder { color: #a8a8a8; opacity: 1; }
.filter label { display: flex; align-items: center; gap: 4px; margin-right: 6px; }
.filter label + label { margin-right: 4px; }
.filter input[type="radio"] { appearance: none; width: 14px; height: 14px; border: 1px solid #666; border-radius: 50%; background: #282828; }
.filter input[type="radio"]:checked { background: radial-gradient(circle, #fff 4px, #282828 5px); }
.burger { display: flex; flex-direction: column; justify-content: center; gap: 3px; width: 20px; height: 20px; padding: 0 2px; border: 1px solid #686868; background: #4a4a4a; }
.burger i { height: 2px; background: #eee; }

.tree-box { display: grid; grid-template-columns: 305px 17px; flex: 1; min-height: 0; background: #282828; }
.tree { min-height: 0; overflow: hidden; }
.row { display: flex; height: 32px; padding: 0 1px 0 8px; white-space: nowrap; }
.row.picked { background: #446fff; font-weight: 700; }
.row .g { width: 20px; border-left: 1px solid #707070; }
.row .none { border-color: transparent; }
.row .b { width: 14px; background: linear-gradient(#707070, #707070) 0 16px / 10px 1px no-repeat, linear-gradient(#707070, #707070) 0 0 / 1px 100% no-repeat; }
.row .half { background-size: 10px 1px, 1px 16px; }
.row .open::before { content: ""; display: block; width: 6px; height: 6px; margin: 13px 0 0 -2px; background: #eee; clip-path: polygon(100% 0, 100% 100%, 0 100%); }
.row label { display: flex; align-items: center; flex: 1; }
.row label svg { width: 16px; height: 14px; margin: 0 6px 0 5px; }
.row .tag { align-self: center; width: 16px; height: 16px; color: #ddd; }
.row .tag.small { width: 14px; height: 14px; margin-right: 1px; }
.row .gold { color: #d69a35; }
.row input { appearance: none; display: grid; width: 14px; height: 14px; border: 1px solid #686868; }
.row input:disabled { border-color: #404040; }
.row input:checked::before { content: ""; width: 8px; height: 4px; margin: 2px 0 0 2px; border: solid #7a7a7a; border-width: 0 0 2px 2px; transform: rotate(-45deg); }
.row.picked input { border-color: #4461b4; background: #3a5bb8; }
.row.picked input::before { border-color: #9a9ae8; }
.scroll { display: flex; flex-direction: column; min-height: 0; padding-left: 1px; }
.scroll svg { background: #414141; }
.scroll .before { flex: 411; }
.scroll .thumb { flex: 86; margin: 0 1px; border: 1px solid #555; background: #414141; }
.scroll .after { flex: 94; }

.foot { display: flex; align-items: center; gap: 14px; height: 59px; border-top: 1px solid #777; background: #3c3c3c; }
.wrench { display: flex; align-items: center; justify-content: center; flex: none; width: 36px; height: 36px; margin-right: -2px; border-radius: 6px; background: #4a4a4a; }
.split { display: flex; flex: none; height: 33px; border: 1px solid #666; background: #4a4b4a; }
.wide-key { display: flex; align-items: center; gap: 7px; width: 94px; padding-left: 9px; white-space: nowrap; }
.up { display: grid; place-items: center; width: 28px; border-left: 1px solid #666; }

/* drawing area */
.stage { display: flex; flex-direction: column; min-height: 0; padding: 4px 0 2px; }
.canvas { position: relative; flex: 1; min-height: 0; overflow: hidden; background: #212830; }
.drawing { position: absolute; inset: 0; width: 100%; height: 100%; }
.view-name { position: absolute; left: 3px; top: 6px; }
.win { position: absolute; right: 10px; top: 9px; display: flex; gap: 8px; }
.compass { position: absolute; right: 13px; top: 36px; }
.caption { position: absolute; left: 617px; bottom: 7px; width: 360px; color: #ddd; font: 300 18px/24px "Liberation Sans", "Noto Sans CJK SC", sans-serif; text-align: center; white-space: nowrap; }

.command { display: flex; height: 61px; padding-top: 2px; }
.handle { width: 25px; background: #2f3542; }
.console { display: flex; flex-direction: column; flex: 1; border-top: 1px solid #222832; background: #222832; }
.log { flex: 1; padding: 5px 2px 0; background: #c8c8c8; color: #111; font: 13px/15px "Liberation Mono", "Noto Sans CJK SC", monospace; }
.entry { display: flex; align-items: center; gap: 5px; height: 20px; margin-top: 1px; padding-left: 4px; background: #fff; color: #222; }
.entry input { flex: 1; height: 20px; font-size: 13px; font-style: italic; }
.entry ::placeholder { color: #777; opacity: 1; }

/* status bar */
.status { display: flex; gap: 2px; height: 25px; padding-top: 1px; background: #222832; white-space: nowrap; }
.sheets { display: flex; align-items: flex-start; margin-right: auto; padding-left: 12px; color: #a4a6aa; }
.sheets a { width: 54px; height: 17px; border-radius: 0 0 8px 8px; background: #2b313d; text-align: center; }
.sheets .on { width: 42px; margin-right: 2px; background: #3c4453; color: #fff; font-weight: 700; }
.sheets button { width: 24px; height: 16px; margin-left: 4px; border-radius: 0 0 10px 6px; background: #2b313d; font-size: 15px; font-weight: 700; }
.seg { display: flex; align-items: center; height: 24px; background: #3c4453; color: #e4e4e4; }
.info { padding-left: 23px; }
.coords { margin-right: 3px; }
.word { padding: 0 3px; }
.word.scale { padding: 0 2px; }
.strong { color: #fff; }
.c { display: grid; place-items: center; width: 24px; height: 24px; }
.c svg { width: 20px; height: 20px; }
.c.lit { width: 22px; height: 22px; background: #5b8ec8; color: #fff; }
.c.red { border: 1px solid #6b6bea; background: #33202a; }
.d { display: grid; place-items: center; width: 16px; height: 24px; }
.d svg { width: 8px; height: 5px; }
.units .word { width: 56px; padding-left: 6px; text-align: left; }
.checks { gap: 1px; padding-right: 6px; }
.view { padding-right: 3px; }
```
